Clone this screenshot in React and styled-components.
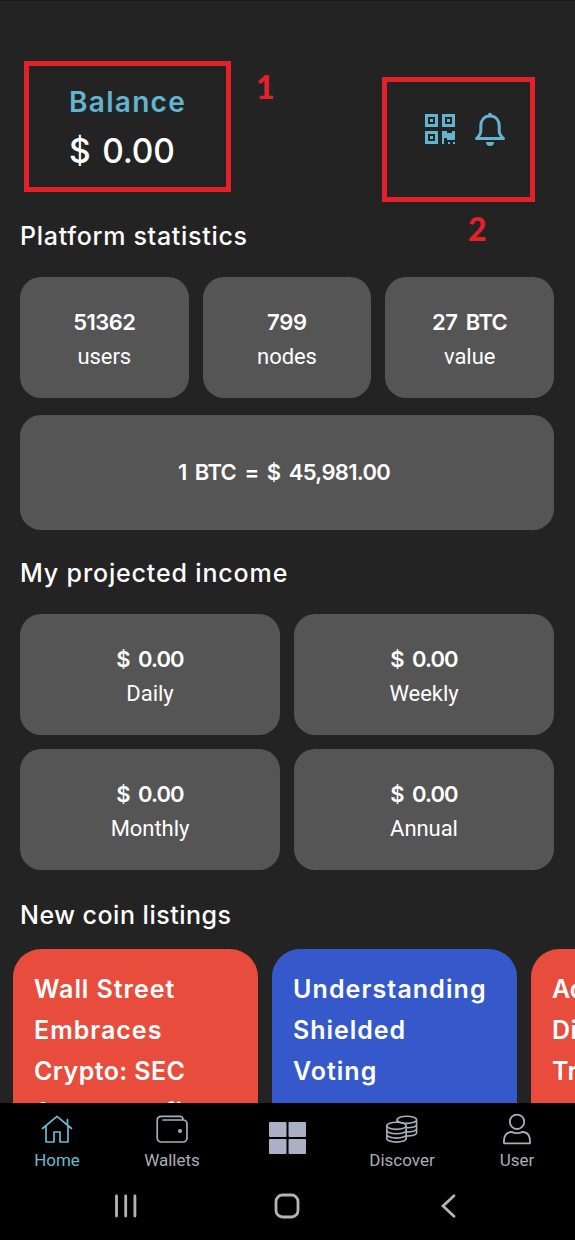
import React from 'react';
import styled, { createGlobalStyle } from 'styled-components';

const Global = createGlobalStyle`
  * { box-sizing: border-box; }
  body { margin: 0; background: #232323; }
`;

const Screen = styled.div`
  position: relative;
  width: 575px;
  height: 1240px;
  overflow: hidden;
  display: flex;
  flex-direction: column;
  background: #232323;
  border-top: 1px solid #1a1a1a;
  color: #fff;
  font-family: Inter, "Liberation Sans", sans-serif;
  white-space: nowrap;
`;

const Content = styled.main`
  flex: 1;
  min-height: 0;
  overflow: hidden;
`;

const Header = styled.header`
  display: flex;
  justify-content: space-between;
  height: 216px;
  padding: 80px 69px 0 69px;
`;

const BalanceLabel = styled.div`
  font-size: 28px;
  line-height: 43px;
  font-weight: 600;
  letter-spacing: 1.3px;
  color: #63b4d1;
`;

const BalanceValue = styled.div`
  font-size: 33.5px;
  line-height: 55px;
  font-weight: 500;
  letter-spacing: -0.2px;
  word-spacing: 3px;
`;

const HeaderActions = styled.div`
  display: flex;
  gap: 19px;
  padding-top: 31px;
  color: #63b4d1;
`;

const SectionTitle = styled.h2`
  margin: ${p => p.$top || 0}px 0 0;
  padding-left: 20px;
  height: ${p => p.$height}px;
  font-size: 25px;
  line-height: 38px;
  font-weight: 450;
  letter-spacing: ${p => p.$spacing || 0}px;
`;

const CardGrid = styled.div`
  display: grid;
  grid-template-columns: repeat(${p => p.$columns}, 1fr);
  gap: 14px;
  padding: 0 21px 0 20px;
`;

const Card = styled.div`
  height: 121px;
  padding-top: 28px;
  border-radius: 21px;
  background: #555;
  text-align: center;
`;

const WideCard = styled(Card)`
  height: 115px;
  margin: 17px 21px 0 20px;
  padding: 40px 6px 0 0;
`;

const CardValue = styled.div`
  font-size: 22px;
  line-height: 35px;
  font-weight: 620;
  letter-spacing: ${p => p.$spacing || 0}px;
  word-spacing: 3.5px;
`;

const CardLabel = styled.div`
  font-family: Roboto, sans-serif;
  font-size: 22px;
  line-height: 34px;
  letter-spacing: -0.05px;
`;

const NewsRow = styled.div`
  display: flex;
  gap: 14px;
  padding-left: 13px;
`;

const NewsCard = styled.article`
  flex: none;
  width: 245px;
  height: 290px;
  padding: 20px 20px 20px 21px;
  border-radius: 28px;
  background: ${p => p.$color};
  font-size: 25px;
  line-height: 41px;
  font-weight: 600;
`;

const NewsLine = styled.div`
  letter-spacing: ${p => p.$spacing || 0}px;
`;

const TabBar = styled.nav`
  display: flex;
  justify-content: space-between;
  height: 71px;
  background: #000;
`;

const Tab = styled.div`
  width: 115px;
  display: flex;
  flex-direction: column;
  align-items: center;
  padding: 8px 1px 0 0;
  font-family: Roboto, sans-serif;
  font-size: 17px;
  line-height: 26px;
  color: ${p => (p.$active ? '#6db9d4' : '#a9adbb')};
  svg { display: block; }
`;

const SystemBar = styled.div`
  display: flex;
  justify-content: space-between;
  align-items: center;
  height: 66px;
  padding: 0 118px 2px 113px;
  background: #000;
  color: #b4b4b4;
`;

const Highlight = styled.div`
  position: absolute;
  left: ${p => p.$x}px;
  top: ${p => p.$y}px;
  width: ${p => p.$w}px;
  height: ${p => p.$h}px;
  border: 5px solid #e2212b;
`;

const HighlightNumber = styled.div`
  position: absolute;
  left: ${p => p.$x}px;
  top: ${p => p.$y}px;
  font-family: Lato, sans-serif;
  font-size: 32px;
  line-height: 40px;
  font-weight: 900;
  color: #e2212b;
`;

const QrIcon = () => (
  <svg width="30" height="34" viewBox="0 -2 30 34" fill="currentColor">
    <path fillRule="evenodd" d="M0 0h13v13H0zM3 3v7h7V3zM17 0h13v13H17zM20 3v7h7V3zM0 17h13v13H0zM3 20v7h7v-7z" />
    <path d="M5 5h3v3H5zM22 5h3v3h-3zM5 22h3v3H5z" />
    <path d="M17 17h5v2h5v-2h3v9h-8v-2h-3v6h-2zM23 28h2v2h-2zM28 28h2v2h-2z" />
  </svg>
);

const BellIcon = () => (
  <svg width="32" height="36" viewBox="0 0 32 36" fill="none" stroke="currentColor" strokeWidth="3" strokeLinecap="round" strokeLinejoin="round">
    <path d="M16 4C10 4 6.800 8.500 6.800 14v5c0 3-1.500 5-4.300 7.500h27c-2.800-2.500-4.300-4.500-4.300-7.500v-5C25.200 8.500 22 4 16 4z" />
    <circle cx="16" cy="2.800" r="2" fill="currentColor" stroke="none" />
    <path d="M12 30h8a4 4 0 0 1-8 0z" fill="currentColor" stroke="none" />
  </svg>
);

const HomeIcon = () => (
  <svg width="34" height="36" viewBox="0 0 34 36" fill="none" stroke="currentColor" strokeWidth="1.700" strokeLinecap="round" strokeLinejoin="round">
    <path d="M2.500 17.500L17 5.300l14.500 12.200M6 15v16h8v-10h6v10h8V15M27.500 13.500V8.500" />
  </svg>
);

const WalletIcon = () => (
  <svg width="34" height="36" viewBox="0 0 34 36" fill="none" stroke="currentColor" strokeWidth="1.700" strokeLinecap="round">
    <path d="M28 9V8.300A3 3 0 0 0 25 5.300H6.200A4 4 0 0 0 2.200 9.300V27a4 4 0 0 0 4 4H28a4 4 0 0 0 4-4V13a4 4 0 0 0-4-4H8" />
    <circle cx="25" cy="20" r="2" fill="currentColor" stroke="none" />
  </svg>
);

const GridIcon = () => (
  <svg width="37" height="45" viewBox="0 0 37 45" fill="#aab1c5">
    <rect x="0" y="11" width="17.500" height="15" rx="1" />
    <rect x="19.500" y="11" width="17.500" height="15" rx="1" />
    <rect x="0" y="28" width="17.500" height="15" rx="1" />
    <rect x="19.500" y="28" width="17.500" height="15" rx="1" />
  </svg>
);

const CoinsIcon = () => (
  <svg width="34" height="36" viewBox="0 0 34 36" fill="none" stroke="currentColor" strokeWidth="1.600">
    <ellipse cx="11.500" cy="14.800" rx="9.700" ry="3.600" />
    <path d="M1.800 14.800v12.700c0 2 4.300 3.600 9.700 3.600s9.700-1.600 9.700-3.600V14.800M1.800 19.200c0 2 4.300 3.600 9.700 3.600s9.700-1.600 9.700-3.600M1.800 23.500c0 2 4.300 3.600 9.700 3.600s9.700-1.600 9.700-3.600" />
    <path d="M12 11V8.800c0-2 4.300-3.600 9.800-3.600s9.800 1.600 9.800 3.600-4.300 3.600-9.800 3.600c-4.500 0-9.800-1.400-9.800-3.600M31.600 8.800v13c0 1.900-4 3.200-10.200 3.300M31.600 13.200c0 2-4 3.500-10.200 3.600M31.600 17.500c0 2-4 3.500-10.200 3.600" />
  </svg>
);

const UserIcon = () => (
  <svg width="34" height="36" viewBox="0 0 34 36" fill="none" stroke="currentColor" strokeWidth="1.800" strokeLinejoin="round">
    <circle cx="17" cy="10.800" r="7.200" />
    <path d="M4 32.300c-.5-6.500 1.700-11.300 7.300-11.300 2 0 3 1.200 5.700 1.200s3.700-1.200 5.700-1.200c5.600 0 7.800 4.800 7.300 11.300z" />
  </svg>
);

const RecentsIcon = () => (
  <svg width="26" height="26" viewBox="0 0 26 26" stroke="currentColor" strokeWidth="2.800" strokeLinecap="round">
    <path d="M3.500 3v20M12.700 3v20M21.900 3v20" />
  </svg>
);

const HomeKeyIcon = () => (
  <svg width="30" height="26" viewBox="0 0 30 26" fill="none" stroke="currentColor" strokeWidth="2.800">
    <rect x="2" y="2" width="22" height="22" rx="6.500" />
  </svg>
);

const BackIcon = () => (
  <svg width="18" height="26" viewBox="0 0 18 26" fill="none" stroke="currentColor" strokeWidth="2.800" strokeLinecap="round">
    <path d="M15 2.800L4 13l11 10.200" />
  </svg>
);

const stats = [
  { value: '51362', label: 'users', spacing: -0.6 },
  { value: '799', label: 'nodes', spacing: -0.2 },
  { value: '27 BTC', label: 'value', spacing: -0.6 },
];

const income = ['Daily', 'Weekly', 'Monthly', 'Annual'];

const news = [
  { color: '#e84c3d', lines: [['Wall Street', 0.95], ['Embraces', 1], ['Crypto: SEC', 0.4], ['Approves first', 0.9]] },
  { color: '#3559cb', lines: [['Understanding', 1.1], ['Shielded', 0.95], ['Voting', 1]] },
  { color: '#e84c3d', lines: [['Advanced', 0], ['Digital', 0.5], ['Trading', 0.5]] },
];

const tabs = [
  { label: 'Home', Icon: HomeIcon, active: true },
  { label: 'Wallets', Icon: WalletIcon },
  { label: '', Icon: GridIcon },
  { label: 'Discover', Icon: CoinsIcon },
  { label: 'User', Icon: UserIcon },
];

export default function App() {
  return (
    <Screen>
      <Global />
      <Content>
        <Header>
          <div>
            <BalanceLabel>Balance</BalanceLabel>
            <BalanceValue>$ 0.00</BalanceValue>
          </div>
          <HeaderActions>
            <QrIcon />
            <BellIcon />
          </HeaderActions>
        </Header>

        <SectionTitle $height={60} $spacing={0.7}>Platform statistics</SectionTitle>
        <CardGrid $columns={3}>
          {stats.map(s => (
            <Card key={s.label}>
              <CardValue $spacing={s.spacing}>{s.value}</CardValue>
              <CardLabel>{s.label}</CardLabel>
            </Card>
          ))}
        </CardGrid>
        <WideCard>
          <CardValue $spacing={-0.7}>1 BTC = $ 45,981.00</CardValue>
        </WideCard>

        <SectionTitle $top={24} $height={60} $spacing={0.85}>My projected income</SectionTitle>
        <CardGrid $columns={2}>
          {income.map(label => (
            <Card key={label}>
              <CardValue $spacing={-0.9}>$ 0.00</CardValue>
              <CardLabel>{label}</CardLabel>
            </Card>
          ))}
        </CardGrid>

        <SectionTitle $top={26} $height={53} $spacing={0.5}>New coin listings</SectionTitle>
        <NewsRow>
          {news.map((n, i) => (
            <NewsCard key={i} $color={n.color}>
              {n.lines.map(([text, spacing]) => (
                <NewsLine key={text} $spacing={spacing}>{text}</NewsLine>
              ))}
            </NewsCard>
          ))}
        </NewsRow>
      </Content>

      <TabBar>
        {tabs.map(({ label, Icon, active }) => (
          <Tab key={label} $active={active}>
            <Icon />
            {label}
          </Tab>
        ))}
      </TabBar>
      <SystemBar>
        <RecentsIcon />
        <HomeKeyIcon />
        <BackIcon />
      </SystemBar>

      <Highlight $x={24} $y={60} $w={207} $h={131} />
      <HighlightNumber $x={256} $y={66}>1</HighlightNumber>
      <Highlight $x={382} $y={76} $w={153} $h={125} />
      <HighlightNumber $x={468} $y={208}>2</HighlightNumber>
    </Screen>
  );
}
